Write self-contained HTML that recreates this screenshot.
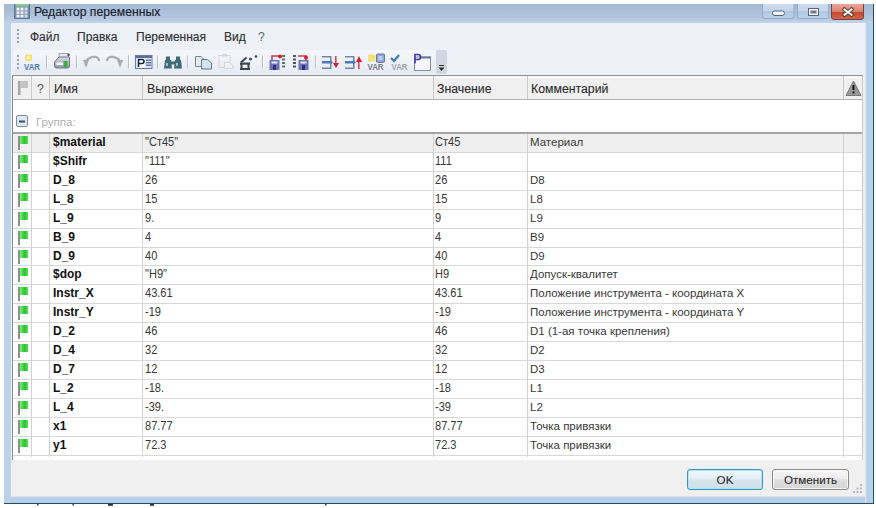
<!DOCTYPE html><html><head><meta charset="utf-8"><style>*{box-sizing:border-box;margin:0;padding:0}
html,body{width:876px;height:508px;overflow:hidden;background:#fff;font-family:"Liberation Sans",sans-serif;position:relative}
.a{position:absolute}
.win{left:4px;top:4px;width:870px;height:500px;background:#bcd2ea;border-right:1px solid #2c4a58;border-bottom:1px solid #2c4a58}
.rfr{left:865px;top:23px;width:8px;height:480px;background:linear-gradient(90deg,#e4eef8 0,#bccce6 25%,#b4d2ee 60%,#a6d8f2 100%)}
.bfr{left:11px;top:496px;width:854px;height:7px;background:linear-gradient(#dfe6f2 0,#b9c9e2 30%,#b4d4f0 80%,#9cc8dc 100%)}
.title{left:4px;top:4px;width:869px;height:19px;background:linear-gradient(#a4bad4 0%,#abc1da 45%,#b5cae0 80%,#c4d5e8 100%)}
.ttext{left:34px;top:5px;font-size:12.2px;line-height:14px;color:#18222e;white-space:nowrap;-webkit-text-stroke:0.15px #18222e}
.client{left:11px;top:23px;width:854px;height:473px;background:#f0f0f0}
.menu{left:11px;top:23px;width:854px;height:52px;background:#eef0f8}
.mi{top:30px;font-size:12px;line-height:14px;color:#303030;white-space:nowrap;-webkit-text-stroke:0.15px #303030}
.tb{left:14px;top:50px;width:421px;height:24px;background:linear-gradient(#f6f7fb,#e6eaf3);border-radius:3px 0 0 3px}
.grid{left:12px;top:75px;width:851px;height:385px;background:#fff;border-left:1px solid #8a8a8a;border-right:1px solid #cacaca;border-top:1px solid #8e8e8e}
.hdr{left:13px;top:76px;width:849px;height:24px;background:linear-gradient(#f8f8f8 0,#f8f8f8 2px,#f0f0f0 3px);border-bottom:1px solid #b4b4b4}
.hl{top:76px;width:1px;height:23px;background:#c8c8c8}
.ht{top:82px;font-size:12.3px;line-height:14px;color:#2a2a2a;white-space:nowrap;-webkit-text-stroke:0.1px #2a2a2a}
.gline{left:13px;top:132px;width:849px;height:2px;background:#a4a4a4}
.rl{left:13px;width:849px;height:1px;background:#d8d8d8}
.cl{top:134px;height:323px;width:1px;background:#d2d2d2}
.tn{left:53px;font-size:12px;line-height:17px;font-weight:bold;color:#111;white-space:nowrap}
.tv{font-size:12px;line-height:17px;color:#383838;white-space:nowrap;transform:scaleX(0.92);transform-origin:0 0}
.flag{left:18px;width:11px;height:15px}
.flag i{position:absolute;left:0;top:0;width:2.2px;height:14px;background:#8a908a}
.flag b{position:absolute;left:2.2px;top:0;width:8px;height:8px;background:linear-gradient(90deg,#86ea86,#28c628 55%,#5ad85a)}
.btn{top:469px;height:21px;border:1px solid #8a8a8a;border-radius:3px;background:linear-gradient(#f6f6f6 0%,#ececec 48%,#dedede 52%,#d6d6d6 100%);box-shadow:inset 0 0 0 1px rgba(255,255,255,0.7);font-size:11.6px;color:#2a2a2a;text-align:center;line-height:19px;-webkit-text-stroke:0.1px #2a2a2a}
.okb{border-color:#3f93bd;background:linear-gradient(#eef8fd 0%,#e3eef4 48%,#d6e4ec 52%,#cde0ea 100%);box-shadow:inset 0 0 0 1px #aee6f8}

#root{position:absolute;left:0;top:0;width:876px;height:508px;overflow:hidden;background:#fff}
.tc{font-size:11.5px;transform:none}
</style></head><body><div id="root">
<div class="win a"></div>
<div class="title a"></div>
<div class="ttext a">Редактор переменных</div>
<div class="rfr a"></div>
<div class="bfr a"></div>
<div class="client a"></div>
<div class="menu a"></div>
<div class="mi a" style="left:30px">Файл</div>
<div class="mi a" style="left:77px">Правка</div>
<div class="mi a" style="left:136px">Переменная</div>
<div class="mi a" style="left:224px">Вид</div>
<div class="mi a" style="left:258px;color:#666;-webkit-text-stroke:0">?</div>
<div class="tb a"></div>
<div class="grid a"></div>
<div class="hdr a"></div>
<div class="hl a" style="left:31px"></div>
<div class="hl a" style="left:49px"></div>
<div class="hl a" style="left:142px"></div>
<div class="hl a" style="left:433px"></div>
<div class="hl a" style="left:527px"></div>
<div class="hl a" style="left:843px"></div>
<div class="ht a" style="left:37px;color:#555;-webkit-text-stroke:0">?</div>
<div class="ht a" style="left:54px">Имя</div>
<div class="ht a" style="left:147px">Выражение</div>
<div class="ht a" style="left:437px">Значение</div>
<div class="ht a" style="left:531px">Комментарий</div>
<div class="a" style="left:36px;top:115px;font-size:11.5px;line-height:14px;color:#b0b0b0">Группа:</div>
<div class="gline a"></div>
<div class="btn okb a" style="left:687px;width:76px">OK</div>
<div class="btn a" style="left:772px;width:77px">Отменить</div>
<svg class="a" style="left:0;top:0;z-index:5" width="876" height="508" viewBox="0 0 876 508">
 <defs>
  <linearGradient id="gmin" x1="0" y1="0" x2="0" y2="1"><stop offset="0" stop-color="#cddcee"/><stop offset="0.5" stop-color="#c3d5ea"/><stop offset="0.51" stop-color="#b2c8e2"/><stop offset="1" stop-color="#bcd2ea"/></linearGradient>
  <linearGradient id="gcls" x1="0" y1="0" x2="0" y2="1"><stop offset="0" stop-color="#eaa899"/><stop offset="0.5" stop-color="#d9826e"/><stop offset="0.51" stop-color="#c8452c"/><stop offset="1" stop-color="#d4664c"/></linearGradient>
 </defs>
 <!-- title icon -->
 <path d="M14.5 4 L14.5 18.5 L29.5 18.5 L29.5 4" fill="#7890ae" stroke="#5d7594"/>
 <rect x="15.5" y="4" width="13" height="2.5" fill="#8ccb8c"/>
 <rect x="16.5" y="7.5" width="3" height="10" fill="#f2f6fa"/>
 <rect x="20.5" y="7.5" width="3" height="10" fill="#f2f6fa"/>
 <rect x="24.5" y="7.5" width="3" height="10" fill="#d4e0ec"/>
 <rect x="15.5" y="10.5" width="13" height="0.9" fill="#8098b4"/>
 <rect x="15.5" y="13.8" width="13" height="0.9" fill="#8098b4"/>
<!-- window buttons -->
 <path d="M762.5 4 L762.5 16.5 Q762.5 18.5 764.5 18.5 L792 18.5 Q794 18.5 794 16.5 L794 4" fill="url(#gmin)" stroke="#93abc8"/>
 <path d="M797.5 4 L797.5 16.5 Q797.5 18.5 799.5 18.5 L826.5 18.5 Q828.5 18.5 828.5 16.5 L828.5 4" fill="url(#gmin)" stroke="#93abc8"/>
 <path d="M831.5 4 L831.5 17 Q831.5 19.5 834 19.5 L861 19.5 Q863.5 19.5 863.5 17 L863.5 4" fill="url(#gcls)" stroke="#6a4646"/>
 <rect x="772.5" y="11" width="12" height="4.5" rx="2.2" fill="#f4f6f8" stroke="#56657a" stroke-width="1"/>
 <rect x="808.5" y="8.5" width="10" height="7" fill="#f4f6f8" stroke="#56657a" stroke-width="1"/>
 <rect x="810.5" y="10.5" width="6" height="3" fill="#6a7a8c"/>
 <path d="M844.5 9.5 L851.5 14.8 M851.5 9.5 L844.5 14.8" stroke="#4a3434" stroke-width="3.8" stroke-linecap="square"/>
 <path d="M844.5 9.5 L851.5 14.8 M851.5 9.5 L844.5 14.8" stroke="#fbfbfb" stroke-width="2" stroke-linecap="square"/>
<!-- menu gripper -->
 <g fill="#9aa4b8"><rect x="17" y="29" width="2" height="2"/><rect x="17" y="33" width="2" height="2"/><rect x="17" y="37" width="2" height="2"/><rect x="17" y="41" width="2" height="2"/></g>
 <!-- toolbar gripper -->
 <g fill="#9aa4b8"><rect x="17" y="55" width="2" height="2"/><rect x="17" y="59" width="2" height="2"/><rect x="17" y="63" width="2" height="2"/><rect x="17" y="67" width="2" height="2"/></g>
 <!-- separators -->
 <g fill="#b8bdca"><rect x="46" y="55.5" width="1" height="13"/><rect x="76" y="55.5" width="1" height="13"/><rect x="128" y="55.5" width="1" height="13"/><rect x="157" y="55.5" width="1" height="13"/><rect x="187" y="55.5" width="1" height="13"/><rect x="262" y="55.5" width="1" height="13"/><rect x="315" y="55.5" width="1" height="13"/></g>
 <g fill="#ffffff"><rect x="47" y="55.5" width="1" height="13"/><rect x="77" y="55.5" width="1" height="13"/><rect x="129" y="55.5" width="1" height="13"/><rect x="158" y="55.5" width="1" height="13"/><rect x="188" y="55.5" width="1" height="13"/><rect x="263" y="55.5" width="1" height="13"/><rect x="316" y="55.5" width="1" height="13"/></g>
 <!-- VAR new -->
 <rect x="25" y="54.5" width="7" height="6.5" fill="#f3e27a"/>
 <rect x="27" y="56.5" width="3" height="2.5" fill="#fff6b8"/>
 <text x="24" y="70" font-family="Liberation Sans" font-weight="bold" font-size="8.5" fill="#4f7cb3" textLength="16" lengthAdjust="spacingAndGlyphs">VAR</text>
 <!-- printer -->
 <defs><linearGradient id="gpr" x1="0" y1="0" x2="0" y2="1"><stop offset="0" stop-color="#d6dae4"/><stop offset="1" stop-color="#8f97aa"/></linearGradient></defs>
 <rect x="59" y="53.5" width="9.5" height="4" fill="#e4e6ec" stroke="#a4a8b4"/>
 <circle cx="68.5" cy="55" r="1.2" fill="#404a5a"/>
 <path d="M54.5 66 L54.5 62 L59 57 L69.5 57 L69.5 66 Q69.5 68 67.5 68 L56.5 68 Q54.5 68 54.5 66 Z" fill="url(#gpr)" stroke="#737b8c"/>
 <rect x="56.5" y="62.5" width="7" height="2.5" fill="#f6f8fa"/>
 <rect x="63.5" y="61" width="4" height="6" fill="#38b040"/>
<!-- undo / redo (disabled) -->
 <path d="M86 66 L86 61 Q90 56 96 57 Q99 58 99 61" fill="none" stroke="#a9adb6" stroke-width="2.2"/>
 <path d="M83 60 L89 60 L86 68 Z" fill="#a9adb6"/>
 <path d="M120 66 L120 61 Q116 56 110 57 Q107 58 107 61" fill="none" stroke="#a9adb6" stroke-width="2.2"/>
 <path d="M123 60 L117 60 L120 68 Z" fill="#a9adb6"/>
 <!-- P= -->
 <rect x="135.5" y="55.5" width="16.5" height="13" fill="#dfe4f2" stroke="#6a78a6"/>
 <rect x="136" y="56" width="16" height="2" fill="#5d6da0"/>
 <rect x="137" y="58.5" width="8" height="9" fill="#ffffff"/>
 <path d="M138.5 67 L138.5 59.5 L142 59.5 Q144 59.5 144 61.5 Q144 63.5 142 63.5 L138.5 63.5" fill="none" stroke="#1e2440" stroke-width="1.6"/>
 <g fill="#6b7bb0"><rect x="146" y="59.5" width="5" height="1.5"/><rect x="146" y="62" width="5" height="1.5"/><rect x="146" y="64.5" width="5" height="1.5"/></g>
 <!-- binoculars -->
 <g fill="#3f6b78">
  <rect x="166" y="56.5" width="4" height="4"/><rect x="176" y="56.5" width="4" height="4"/>
  <path d="M165 60 L171 60 L172 68.5 L164 68.5 Z"/><path d="M175 60 L181 60 L182 68.5 L174 68.5 Z"/>
  <rect x="170" y="61.5" width="6" height="3"/>
 </g>
 <g fill="#9fc4cc"><rect x="166" y="63" width="2" height="3"/><rect x="176" y="63" width="2" height="3"/></g>
 <!-- copy -->
 <path d="M195.5 56.5 L201 56.5 L203.5 59 L203.5 66.5 L195.5 66.5 Z" fill="#e6eaf0" stroke="#7a8494"/>
 <path d="M201.5 59.5 L207.5 59.5 L211.5 63 L211.5 69 L201.5 69 Z" fill="#d2e4f2" stroke="#67748a"/>
<!-- paste disabled -->
 <rect x="219" y="55.5" width="11" height="12" fill="none" stroke="#d4d6da"/>
 <rect x="222" y="54" width="5" height="2.5" fill="#d4d6da"/>
 <path d="M224.5 62.5 L229 62.5 L233 65.5 L233 68.5 L224.5 68.5 Z" fill="#eef0f4" stroke="#d0d3d8"/>
 <!-- stool / fx icon -->
 <g fill="#3f4651">
  <rect x="240" y="62.5" width="10" height="2.2"/>
  <rect x="240" y="68" width="10" height="2"/>
  <rect x="240.5" y="64" width="2" height="5"/>
  <rect x="247.5" y="64" width="2" height="5"/>
  <circle cx="250.5" cy="59" r="1.5"/>
  <circle cx="256" cy="56.5" r="1.3"/>
 </g>
 <path d="M241 62.5 L246.5 57.5" stroke="#3f4651" stroke-width="2"/>
<!-- icon A -->
 <rect x="269.5" y="60" width="10" height="10" fill="#6d72b8"/>
 <rect x="271.5" y="61.5" width="6" height="2" fill="#e8ecf8"/>
 <rect x="273" y="65" width="3" height="5" fill="#2d3270"/>
 <path d="M272 60 L272 56 L280 56" fill="none" stroke="#d23a48" stroke-width="1.6"/>
 <circle cx="280" cy="56.5" r="2" fill="#d2222e"/>
 <g fill="#5a7a70"><rect x="282" y="55" width="3" height="2"/><rect x="282" y="58.5" width="3" height="2"/><rect x="282" y="62" width="3" height="2"/><rect x="282" y="65.5" width="3" height="2"/></g>
 <!-- icon B -->
 <g fill="#4a5a6a"><rect x="293" y="55" width="3" height="2"/><rect x="293" y="58.5" width="3" height="2"/><rect x="293" y="62" width="3" height="2"/><rect x="293" y="65.5" width="3" height="2"/></g>
 <rect x="298.5" y="60" width="10" height="10" fill="#6d72b8"/>
 <rect x="300.5" y="61.5" width="6" height="2" fill="#e8ecf8"/>
 <rect x="302" y="65" width="3" height="5" fill="#2d3270"/>
 <path d="M298 56 L306 56 L306 60" fill="none" stroke="#d23a48" stroke-width="1.6"/>
 <circle cx="306" cy="57.5" r="2" fill="#d2222e"/>
 <!-- icon C -->
 <g fill="#6f86a8"><rect x="322" y="56" width="9" height="1.5"/><rect x="322" y="67.5" width="9" height="1.5"/><rect x="330" y="56" width="1.5" height="13"/></g>
 <path d="M322 61 L330 61 L330 59.5 L333 62.2 L330 65 L330 63.5 L322 63.5 Z" fill="#4f78c0"/>
 <rect x="335" y="56" width="1.6" height="8" fill="#d84a52"/>
 <path d="M333 63 L339 63 L336 68 Z" fill="#d8202a"/>
 <!-- icon D -->
 <g fill="#6f86a8"><rect x="345" y="56" width="9" height="1.5"/><rect x="345" y="67.5" width="9" height="1.5"/><rect x="353" y="56" width="1.5" height="13"/></g>
 <path d="M345 61 L353 61 L353 59.5 L356 62.2 L353 65 L353 63.5 L345 63.5 Z" fill="#4f78c0"/>
 <rect x="358" y="61" width="1.6" height="8" fill="#d84a52"/>
 <path d="M356 62 L362 62 L359 56 Z" fill="#d8202a"/>
 <!-- icon E -->
 <rect x="368" y="54.5" width="7.5" height="7" fill="#f3e27a"/>
 <rect x="376.5" y="54" width="8" height="8.5" rx="1" fill="#8fa6d6" stroke="#6878a8"/>
 <rect x="378.5" y="56" width="4" height="4" fill="#bdd0f0"/>
 <text x="367.5" y="70" font-family="Liberation Sans" font-weight="bold" font-size="8.5" fill="#7a7f88" textLength="16" lengthAdjust="spacingAndGlyphs">VAR</text>
 <!-- icon F -->
 <path d="M391 58 L394 61 L399 55" fill="none" stroke="#3d7fb4" stroke-width="2.2"/>
 <text x="391.5" y="70" font-family="Liberation Sans" font-weight="bold" font-size="8.5" fill="#a4a8b0" textLength="16" lengthAdjust="spacingAndGlyphs">VAR</text>
 <!-- icon G -->
 <rect x="414.5" y="57" width="16" height="13.5" fill="#f4f6fb" stroke="#8890a0"/>
 <rect x="420" y="56.5" width="11" height="2" fill="#6a7aa0"/>
 <path d="M415 63.5 L415 54.5 L418 54.5 Q420.5 54.5 420.5 57 Q420.5 59.5 418 59.5 L415 59.5" fill="none" stroke="#4434b0" stroke-width="1.6"/>
 <!-- overflow -->
 <rect x="436" y="50" width="11" height="24" rx="2" fill="#d2d6e0"/>
 <rect x="439" y="65" width="5" height="1" fill="#2a2a2a"/>
 <path d="M438.5 67.5 L444.5 67.5 L441.5 71 Z" fill="#2a2a2a"/>
 <!-- header flag -->
 <rect x="18" y="81" width="2.5" height="14" fill="#a6a6a6"/>
 <rect x="20.5" y="81" width="7.5" height="7" fill="#c4c4c4"/>
 <!-- minus box -->
 <rect x="16.5" y="115.5" width="11" height="11" rx="1.5" fill="#dfe7f3" stroke="#7f8ea6"/>
 <rect x="19" y="120.5" width="6" height="2" fill="#3e4a64"/>
 <!-- warning -->
 <path d="M853.5 81 L861 95.5 L846 95.5 Z" fill="#999" stroke="#777" stroke-width="1" stroke-linejoin="round"/>
 <rect x="852.5" y="85" width="2" height="5" fill="#111"/>
 <rect x="852.5" y="91.5" width="2" height="2" fill="#111"/>
 <!-- specks below window -->
 <g fill="#2a3438"><rect x="37" y="504" width="1.5" height="1.5"/><rect x="72.5" y="504" width="1.5" height="1.5"/><rect x="108" y="504" width="5" height="1.8"/><rect x="150" y="504" width="4" height="1.8"/><rect x="325" y="504" width="1.5" height="1.5"/></g>
 <!-- size grip -->
 <g fill="#b4b8c0"><rect x="860" y="484" width="2" height="2"/><rect x="860" y="487.5" width="2" height="2"/><rect x="856.5" y="487.5" width="2" height="2"/><rect x="860" y="491" width="2" height="2"/><rect x="856.5" y="491" width="2" height="2"/><rect x="853" y="491" width="2" height="2"/></g>
</svg>

<div class="a" style="left:13px;top:134px;width:849px;height:18px;background:#efefef"></div>
<div class="rl a" style="top:152px"></div>
<div class="flag a" style="top:136px"><i></i><b></b></div>
<div class="tn a" style="top:134px">$material</div>
<div class="tv a" style="left:145px;top:134px">"Ст45"</div>
<div class="tv a" style="left:435px;top:134px">Ст45</div>
<div class="tv tc a" style="left:530px;top:134px">Материал</div>
<div class="rl a" style="top:171px"></div>
<div class="flag a" style="top:155px"><i></i><b></b></div>
<div class="tn a" style="top:153px">$Shifr</div>
<div class="tv a" style="left:145px;top:153px">"111"</div>
<div class="tv a" style="left:435px;top:153px">111</div>
<div class="rl a" style="top:190px"></div>
<div class="flag a" style="top:174px"><i></i><b></b></div>
<div class="tn a" style="top:172px">D_8</div>
<div class="tv a" style="left:145px;top:172px">26</div>
<div class="tv a" style="left:435px;top:172px">26</div>
<div class="tv tc a" style="left:530px;top:172px">D8</div>
<div class="rl a" style="top:209px"></div>
<div class="flag a" style="top:193px"><i></i><b></b></div>
<div class="tn a" style="top:191px">L_8</div>
<div class="tv a" style="left:145px;top:191px">15</div>
<div class="tv a" style="left:435px;top:191px">15</div>
<div class="tv tc a" style="left:530px;top:191px">L8</div>
<div class="rl a" style="top:228px"></div>
<div class="flag a" style="top:212px"><i></i><b></b></div>
<div class="tn a" style="top:210px">L_9</div>
<div class="tv a" style="left:145px;top:210px">9.</div>
<div class="tv a" style="left:435px;top:210px">9</div>
<div class="tv tc a" style="left:530px;top:210px">L9</div>
<div class="rl a" style="top:247px"></div>
<div class="flag a" style="top:231px"><i></i><b></b></div>
<div class="tn a" style="top:229px">B_9</div>
<div class="tv a" style="left:145px;top:229px">4</div>
<div class="tv a" style="left:435px;top:229px">4</div>
<div class="tv tc a" style="left:530px;top:229px">B9</div>
<div class="rl a" style="top:265px"></div>
<div class="flag a" style="top:250px"><i></i><b></b></div>
<div class="tn a" style="top:248px">D_9</div>
<div class="tv a" style="left:145px;top:248px">40</div>
<div class="tv a" style="left:435px;top:248px">40</div>
<div class="tv tc a" style="left:530px;top:248px">D9</div>
<div class="rl a" style="top:284px"></div>
<div class="flag a" style="top:268px"><i></i><b></b></div>
<div class="tn a" style="top:266px">$dop</div>
<div class="tv a" style="left:145px;top:266px">"H9"</div>
<div class="tv a" style="left:435px;top:266px">H9</div>
<div class="tv tc a" style="left:530px;top:266px">Допуск-квалитет</div>
<div class="rl a" style="top:303px"></div>
<div class="flag a" style="top:287px"><i></i><b></b></div>
<div class="tn a" style="top:285px">Instr_X</div>
<div class="tv a" style="left:145px;top:285px">43.61</div>
<div class="tv a" style="left:435px;top:285px">43.61</div>
<div class="tv tc a" style="left:530px;top:285px">Положение инструмента - координата X</div>
<div class="rl a" style="top:322px"></div>
<div class="flag a" style="top:306px"><i></i><b></b></div>
<div class="tn a" style="top:304px">Instr_Y</div>
<div class="tv a" style="left:145px;top:304px">-19</div>
<div class="tv a" style="left:435px;top:304px">-19</div>
<div class="tv tc a" style="left:530px;top:304px">Положение инструмента - координата Y</div>
<div class="rl a" style="top:341px"></div>
<div class="flag a" style="top:325px"><i></i><b></b></div>
<div class="tn a" style="top:323px">D_2</div>
<div class="tv a" style="left:145px;top:323px">46</div>
<div class="tv a" style="left:435px;top:323px">46</div>
<div class="tv tc a" style="left:530px;top:323px">D1 (1-ая точка крепления)</div>
<div class="rl a" style="top:360px"></div>
<div class="flag a" style="top:344px"><i></i><b></b></div>
<div class="tn a" style="top:342px">D_4</div>
<div class="tv a" style="left:145px;top:342px">32</div>
<div class="tv a" style="left:435px;top:342px">32</div>
<div class="tv tc a" style="left:530px;top:342px">D2</div>
<div class="rl a" style="top:379px"></div>
<div class="flag a" style="top:363px"><i></i><b></b></div>
<div class="tn a" style="top:361px">D_7</div>
<div class="tv a" style="left:145px;top:361px">12</div>
<div class="tv a" style="left:435px;top:361px">12</div>
<div class="tv tc a" style="left:530px;top:361px">D3</div>
<div class="rl a" style="top:398px"></div>
<div class="flag a" style="top:382px"><i></i><b></b></div>
<div class="tn a" style="top:380px">L_2</div>
<div class="tv a" style="left:145px;top:380px">-18.</div>
<div class="tv a" style="left:435px;top:380px">-18</div>
<div class="tv tc a" style="left:530px;top:380px">L1</div>
<div class="rl a" style="top:417px"></div>
<div class="flag a" style="top:401px"><i></i><b></b></div>
<div class="tn a" style="top:399px">L_4</div>
<div class="tv a" style="left:145px;top:399px">-39.</div>
<div class="tv a" style="left:435px;top:399px">-39</div>
<div class="tv tc a" style="left:530px;top:399px">L2</div>
<div class="rl a" style="top:436px"></div>
<div class="flag a" style="top:420px"><i></i><b></b></div>
<div class="tn a" style="top:418px">x1</div>
<div class="tv a" style="left:145px;top:418px">87.77</div>
<div class="tv a" style="left:435px;top:418px">87.77</div>
<div class="tv tc a" style="left:530px;top:418px">Точка привязки</div>
<div class="rl a" style="top:455px"></div>
<div class="flag a" style="top:439px"><i></i><b></b></div>
<div class="tn a" style="top:437px">y1</div>
<div class="tv a" style="left:145px;top:437px">72.3</div>
<div class="tv a" style="left:435px;top:437px">72.3</div>
<div class="tv tc a" style="left:530px;top:437px">Точка привязки</div>
<div class="cl a" style="left:31px"></div>
<div class="cl a" style="left:49px"></div>
<div class="cl a" style="left:142px"></div>
<div class="cl a" style="left:433px"></div>
<div class="cl a" style="left:527px"></div>
<div class="cl a" style="left:843px"></div>
</div></body></html>
